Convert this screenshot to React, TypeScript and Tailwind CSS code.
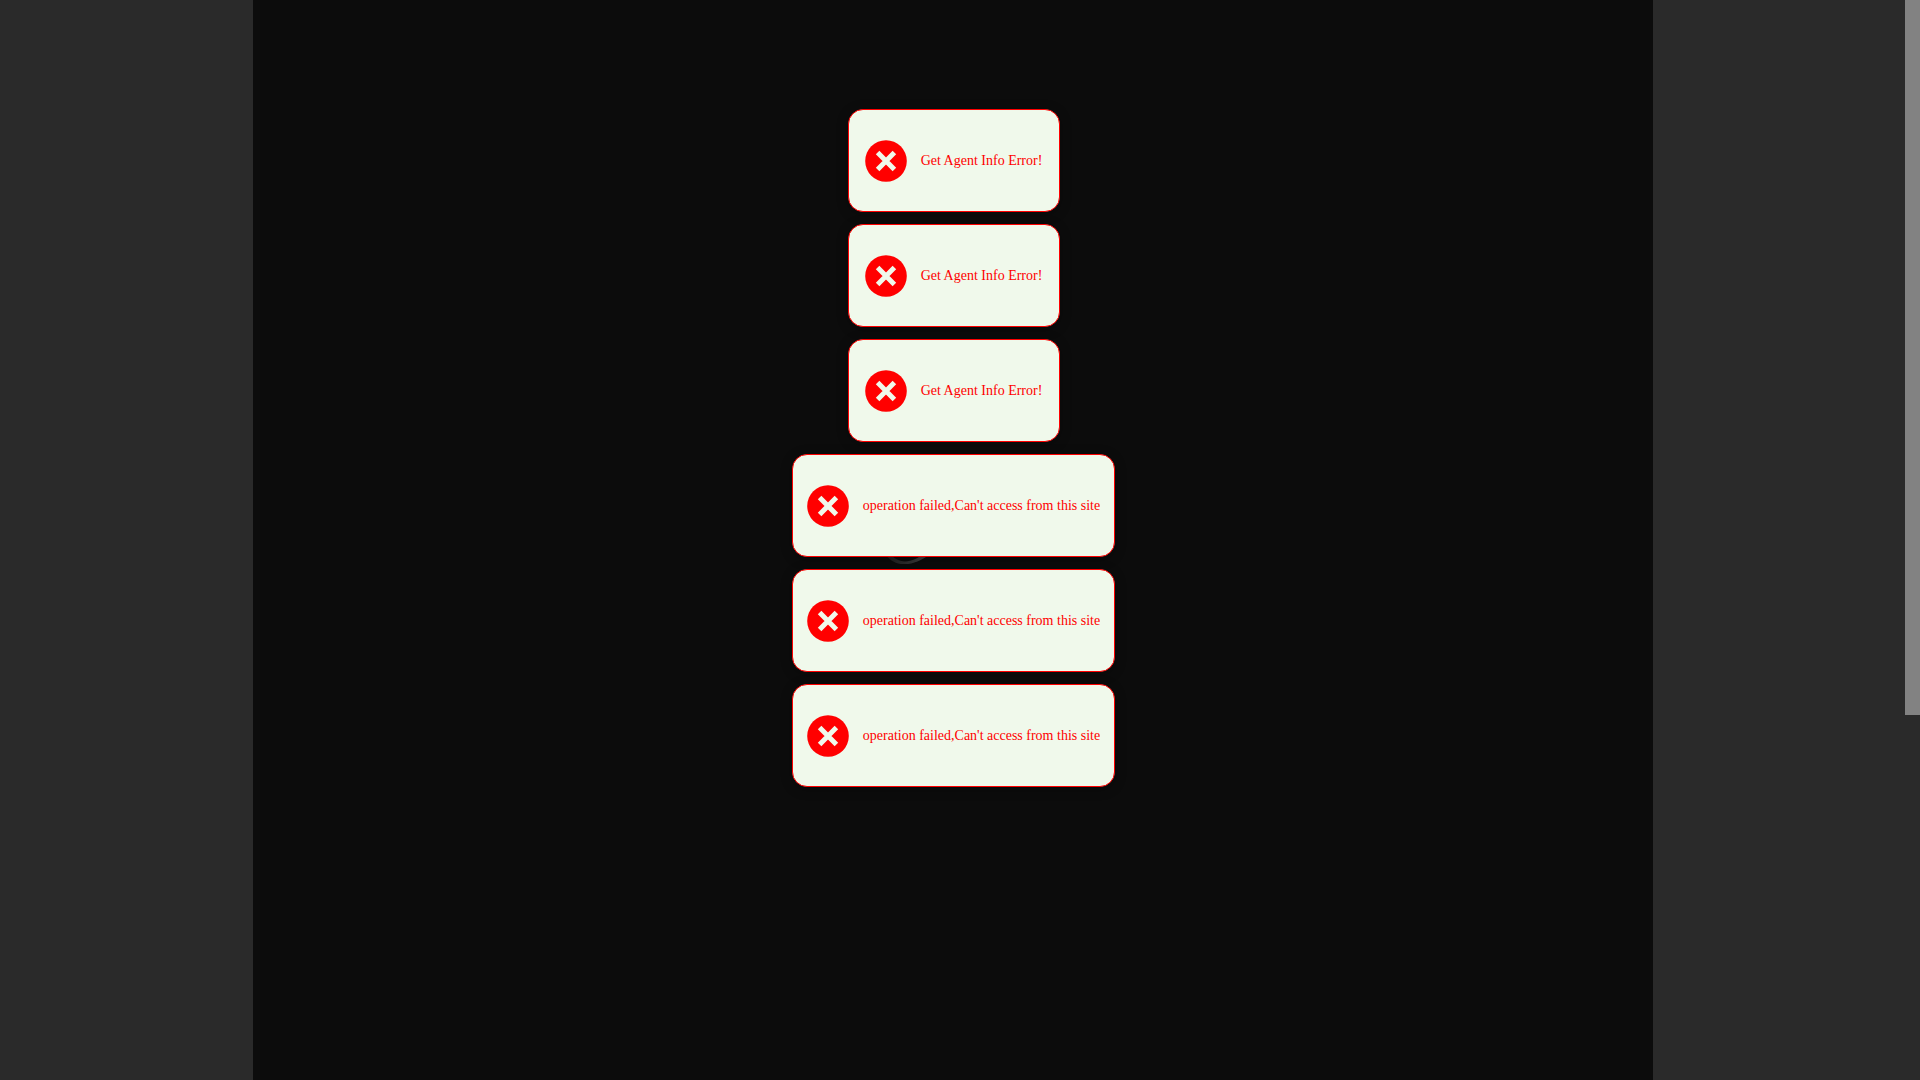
import React from 'react';

const messages = [
  { id: 1, text: 'Get Agent Info Error!' },
  { id: 2, text: 'Get Agent Info Error!' },
  { id: 3, text: 'Get Agent Info Error!' },
  { id: 4, text: "operation failed,Can't access from this site" },
  { id: 5, text: "operation failed,Can't access from this site" },
  { id: 6, text: "operation failed,Can't access from this site" },
];

const ErrorIcon: React.FC = () => (
  <svg className="h-[42px] w-[42px] shrink-0" viewBox="0 0 42 42" aria-hidden="true">
    <circle cx="21" cy="21" r="20.8" fill="#ff0000" />
    <path
      d="M12.6 12.6 29.4 29.4M29.4 12.6 12.6 29.4"
      stroke="#f0f9eb"
      strokeWidth="5"
    />
  </svg>
);

const Toast: React.FC<{ text: string }> = ({ text }) => (
  <div
    role="alert"
    className="flex h-[103px] min-w-[212px] items-center justify-center gap-3.5 rounded-[15px] border border-[#ff0000] bg-[#f0f9eb] px-3.5 shadow-[0_2px_12px_rgba(0,0,0,0.3)]"
  >
    <ErrorIcon />
    <p className="text-sm whitespace-nowrap text-[#ff0000]">{text}</p>
  </div>
);

const Loader: React.FC = () => (
  <svg className="absolute top-[508px] left-[626px] h-14 w-14" viewBox="0 0 56 56" aria-hidden="true">
    <defs>
      <linearGradient id="loader-fade" x1="0" y1="0" x2="1" y2="0">
        <stop offset="0" stopColor="#1c1c1c" />
        <stop offset="0.5" stopColor="#303030" />
        <stop offset="1" stopColor="#4a4a4a" />
      </linearGradient>
    </defs>
    <path d="M5 44C14 60 34 61 55 43L46 44C34 56 18 57 10 44Z" fill="url(#loader-fade)" />
  </svg>
);

const App: React.FC = () => {
  return (
    <div className="flex min-h-screen bg-[#2a2a2a] font-['Liberation_Serif',serif]">
      <div className="flex flex-1 justify-center">
        <main className="relative w-full max-w-[1400px] bg-[#0c0c0c]">
          <Loader />
          <div className="relative flex flex-col items-center gap-3 pt-[109px] pl-0.5">
            {messages.map((message) => (
              <Toast key={message.id} text={message.text} />
            ))}
          </div>
        </main>
      </div>

      {/* Scroll track */}
      <div className="w-[15px] bg-[#2a2a2a]">
        <div className="h-[715px] bg-[#828282]" />
      </div>
    </div>
  );
};

export default App;
